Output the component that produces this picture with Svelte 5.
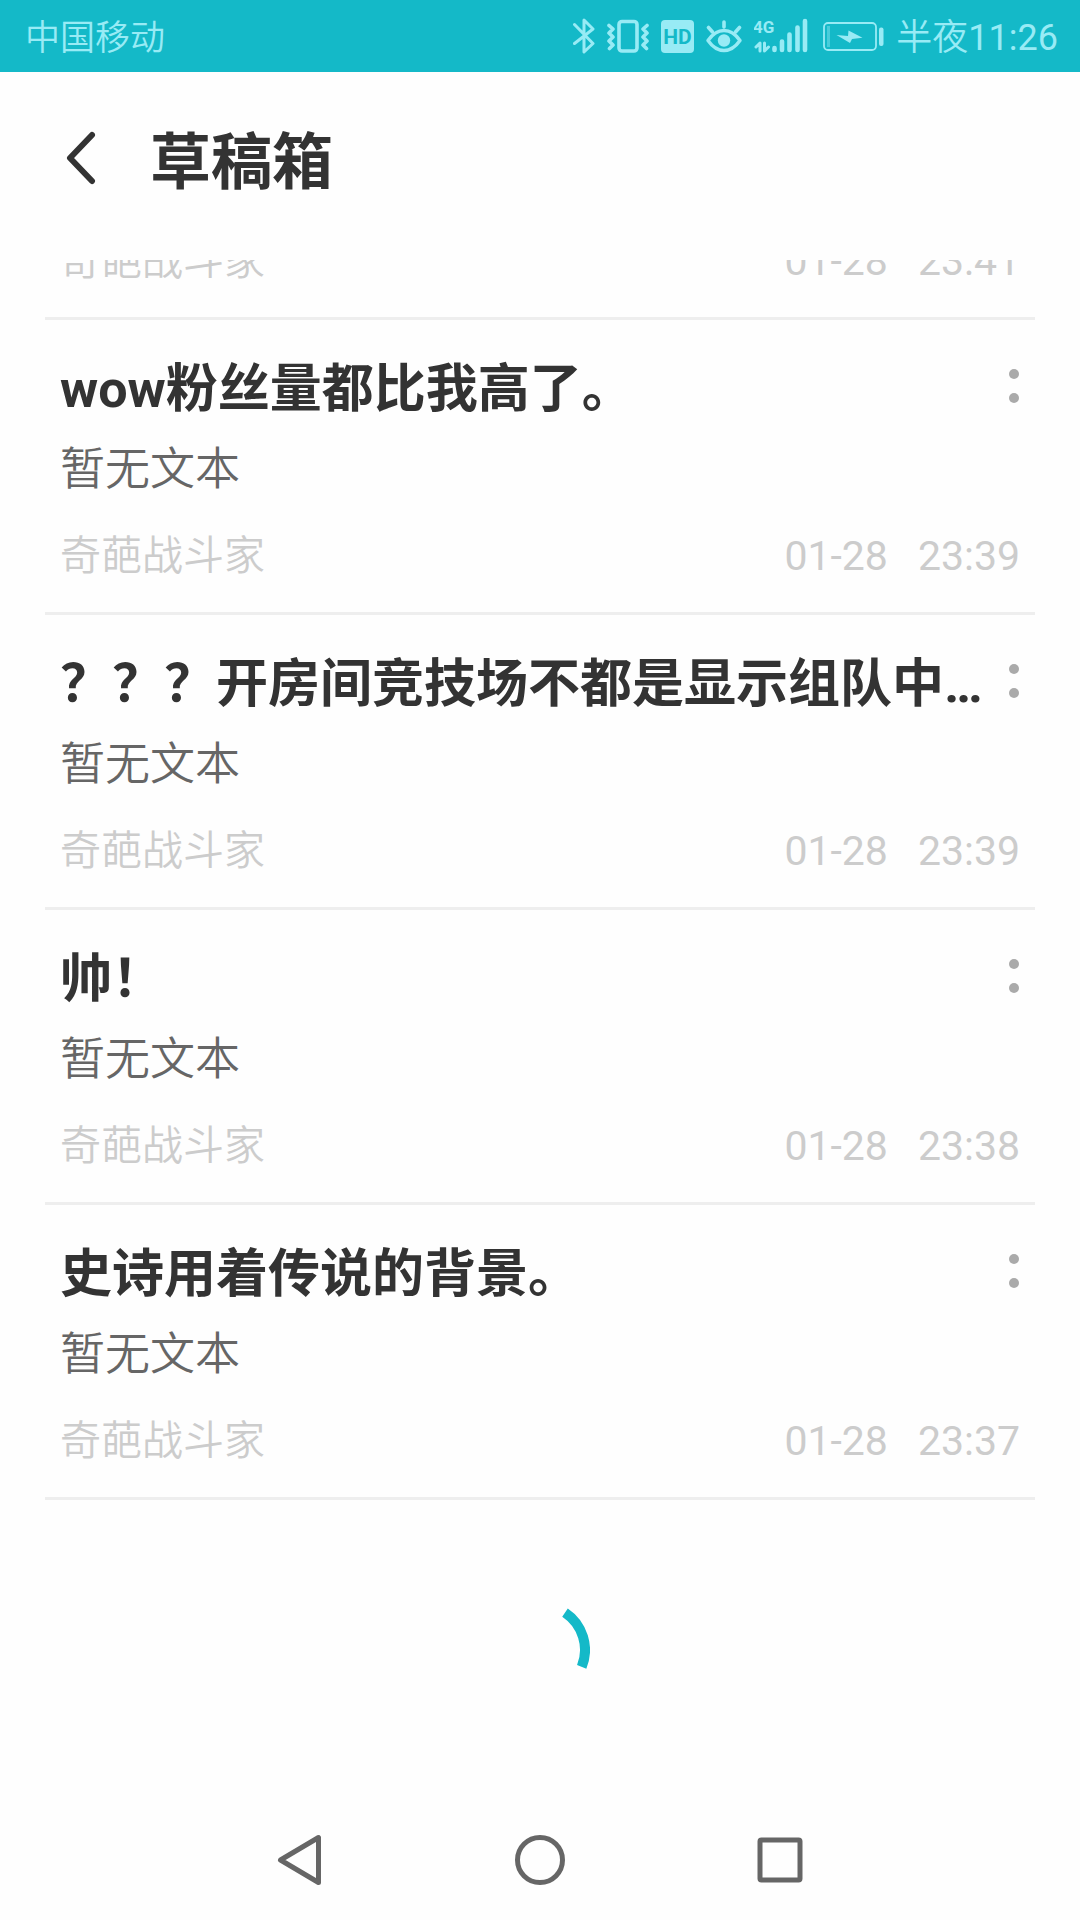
<script lang="ts">
	type Draft = {
		title?: string;
		body?: string;
		board: string;
		date: string;
		time: string;
	};

	// a draft without a title is the one scrolled under the header
	let drafts: Draft[] = $state([
		{ board: '奇葩战斗家', date: '01-28', time: '23:41' },
		{
			title: 'wow粉丝量都比我高了。',
			body: '暂无文本',
			board: '奇葩战斗家',
			date: '01-28',
			time: '23:39'
		},
		{
			title: '？？？开房间竞技场不都是显示组队中…',
			body: '暂无文本',
			board: '奇葩战斗家',
			date: '01-28',
			time: '23:39'
		},
		{ title: '帅！', body: '暂无文本', board: '奇葩战斗家', date: '01-28', time: '23:38' },
		{
			title: '史诗用着传说的背景。',
			body: '暂无文本',
			board: '奇葩战斗家',
			date: '01-28',
			time: '23:37'
		}
	]);
</script>

<div class="screen">
	<div class="status">
		<span class="carrier">中国移动</span>
		<div class="indicators">
			<svg width="22" height="36" viewBox="0 0 22 36" class="line">
				<path d="M1.5 6.5 20 25.5 11 34V2l9 9L1.5 25.5" stroke-width="3" />
			</svg>
			<svg width="42" height="36" viewBox="0 0 42 36" class="line">
				<rect x="12" y="3.5" width="18" height="29.5" rx="3" stroke-width="3.6" />
				<path
					d="M2 7.5l4 3.5-4 4 4 4-4 4 4 4-3.5 3.5M40 7.5l-4 3.5 4 4-4 4 4 4-4 4 3.5 3.5"
					stroke-width="3.6"
				/>
			</svg>
			<svg width="33" height="36" viewBox="0 0 33 36">
				<rect x="0" y="2" width="33" height="33" rx="4" fill="currentColor" />
				<text x="16.5" y="26" text-anchor="middle" class="hd">HD</text>
			</svg>
			<svg width="36" height="36" viewBox="0 0 36 36" class="line">
				<path d="M2 22.5Q9 12.5 18 12.5t16 10Q27 32.5 18 32.5T2 22.5z" stroke-width="3.4" />
				<path d="M18 4v5M2.5 9.5l4 4.5M33.5 9.5l-4 4.5" stroke-width="3.6" />
				<circle cx="18" cy="22.5" r="6.2" fill="currentColor" stroke="none" />
			</svg>
			<svg width="57" height="36" viewBox="0 0 57 36" class="line">
				<text x="-1" y="15" class="net">4G</text>
				<path d="M6 33V25l-4 4M10.5 25v8l4-4" stroke-width="3" />
				<path d="M20.5 30v2M28 23.5V32M35.5 16.5V32M43.5 9.5V32M51 3V32" stroke-width="4.6" />
			</svg>
			<svg width="61" height="36" viewBox="0 0 61 36">
				<rect
					x="1"
					y="5"
					width="52"
					height="27"
					rx="4"
					fill="none"
					stroke="currentColor"
					stroke-width="1.8"
				/>
				<rect x="4" y="8" width="3" height="21" fill="currentColor" opacity="0.4" />
				<rect x="56" y="9.5" width="4.5" height="18.5" rx="2" fill="currentColor" />
				<path d="M13.5 17 25 18l.5-5.5 14 7.3-10.5 1.2-2 4z" fill="currentColor" />
			</svg>
			<span class="clock">半夜<span class="digits">11:26</span></span>
		</div>
	</div>

	<header>
		<button class="back" aria-label="返回">
			<svg width="32" height="56" viewBox="0 0 32 56">
				<path
					d="M26 5 4 28l22 23"
					fill="none"
					stroke="currentColor"
					stroke-width="6"
					stroke-linecap="round"
					stroke-linejoin="round"
				/>
			</svg>
		</button>
		<h1>草稿箱</h1>
	</header>

	<main>
		<ul>
			{#each drafts as draft}
				<li class="draft" class:cut={!draft.title}>
					{#if draft.title}
						<div class="top">
							<h2>{draft.title}</h2>
							<button class="more" aria-label="更多">
								<span class="dot"></span>
								<span class="dot"></span>
							</button>
						</div>
						<p class="body">{draft.body}</p>
					{/if}
					<div class="meta">
						<span>{draft.board}</span>
						<span class="when">
							<span>{draft.date}</span>
							<span>{draft.time}</span>
						</span>
					</div>
				</li>
			{/each}
		</ul>

		<div class="loading">
			<svg width="100" height="100" viewBox="0 0 100 100">
				<path
					d="M75 12.6A45 45 0 0 1 91.7 66.9"
					fill="none"
					stroke="#14b9c8"
					stroke-width="10"
				/>
			</svg>
		</div>
	</main>

	<nav>
		<button aria-label="后退">
			<svg width="60" height="60" viewBox="0 0 60 60">
				<path d="M48.5 7.5v45L10.5 30z" />
			</svg>
		</button>
		<button aria-label="主屏幕">
			<svg width="60" height="60" viewBox="0 0 60 60">
				<circle cx="30" cy="30" r="22.5" />
			</svg>
		</button>
		<button aria-label="最近任务">
			<svg width="60" height="60" viewBox="0 0 60 60">
				<rect x="10" y="10" width="40" height="40" rx="1.5" />
			</svg>
		</button>
	</nav>
</div>

<style>
	:global(body) {
		margin: 0;
		background: #fefefe;
	}
	.screen {
		display: flex;
		flex-direction: column;
		min-height: 100vh;
		font-family: Roboto, 'Noto Sans CJK SC', sans-serif;
		color: #333;
	}
	button {
		padding: 0;
		border: 0;
		background: none;
		color: inherit;
		cursor: pointer;
	}
	svg {
		display: block;
	}

	.status {
		display: flex;
		align-items: center;
		justify-content: space-between;
		height: 72px;
		padding: 0 22px 0 25px;
		background: #14b9c8;
		color: #98ebf5;
		font-weight: 350;
		line-height: 40px;
	}
	.indicators {
		display: flex;
		align-items: center;
		gap: 12px;
	}
	.line {
		fill: none;
		stroke: currentColor;
		stroke-linecap: round;
		stroke-linejoin: round;
	}
	.hd {
		font-size: 21px;
		font-weight: 700;
		fill: #14b9c8;
	}
	.net {
		font-size: 17px;
		font-weight: 700;
		fill: currentColor;
		stroke: none;
	}
	.carrier {
		padding-top: 6px;
		font-size: 35px;
	}
	.clock {
		padding-top: 4px;
		font-size: 36px;
	}
	.digits {
		font-weight: 400;
	}

	header {
		display: flex;
		align-items: center;
		gap: 52px;
		height: 188px;
		box-sizing: border-box;
		padding: 0 66px 16px;
	}
	h1 {
		margin: 0;
		padding-top: 10px;
		font-size: 61px;
		line-height: 72px;
		font-weight: 700;
	}

	main {
		flex: 1;
	}
	ul {
		margin: 0;
		padding: 0 45px;
		list-style: none;
	}
	.draft {
		padding: 40px 15px 26px;
		border-bottom: 3px solid #eee;
	}
	.cut {
		display: flex;
		flex-direction: column;
		justify-content: flex-end;
		height: 57px;
		padding-top: 0;
		padding-bottom: 0;
		overflow: hidden;
	}
	.cut .meta {
		padding-bottom: 26px;
	}
	.top {
		display: flex;
		align-items: flex-start;
		justify-content: space-between;
	}
	h2 {
		margin: 0;
		overflow: hidden;
		font-size: 52px;
		line-height: 60px;
		font-weight: 700;
		white-space: nowrap;
	}
	.more {
		display: flex;
		flex: none;
		flex-direction: column;
		align-items: center;
		justify-content: center;
		gap: 14px;
		width: 12px;
		height: 52px;
	}
	.dot {
		width: 10px;
		height: 10px;
		border-radius: 50%;
		background: #aaa;
	}
	.body {
		margin: 22px 0 28px;
		font-size: 45px;
		line-height: 56px;
		font-weight: 350;
		color: #666;
	}
	.meta {
		display: flex;
		justify-content: space-between;
		font-size: 41px;
		line-height: 60px;
		font-weight: 350;
		color: #ccc;
	}
	.when {
		display: flex;
		gap: 30px;
		font-weight: 400;
	}

	.loading {
		display: flex;
		justify-content: center;
		padding: 100px 0;
	}

	nav {
		display: flex;
		align-items: center;
		justify-content: center;
		gap: 180px;
		height: 120px;
		color: #666;
	}
	nav svg {
		fill: none;
		stroke: currentColor;
		stroke-width: 5;
		stroke-linejoin: round;
	}
</style>
